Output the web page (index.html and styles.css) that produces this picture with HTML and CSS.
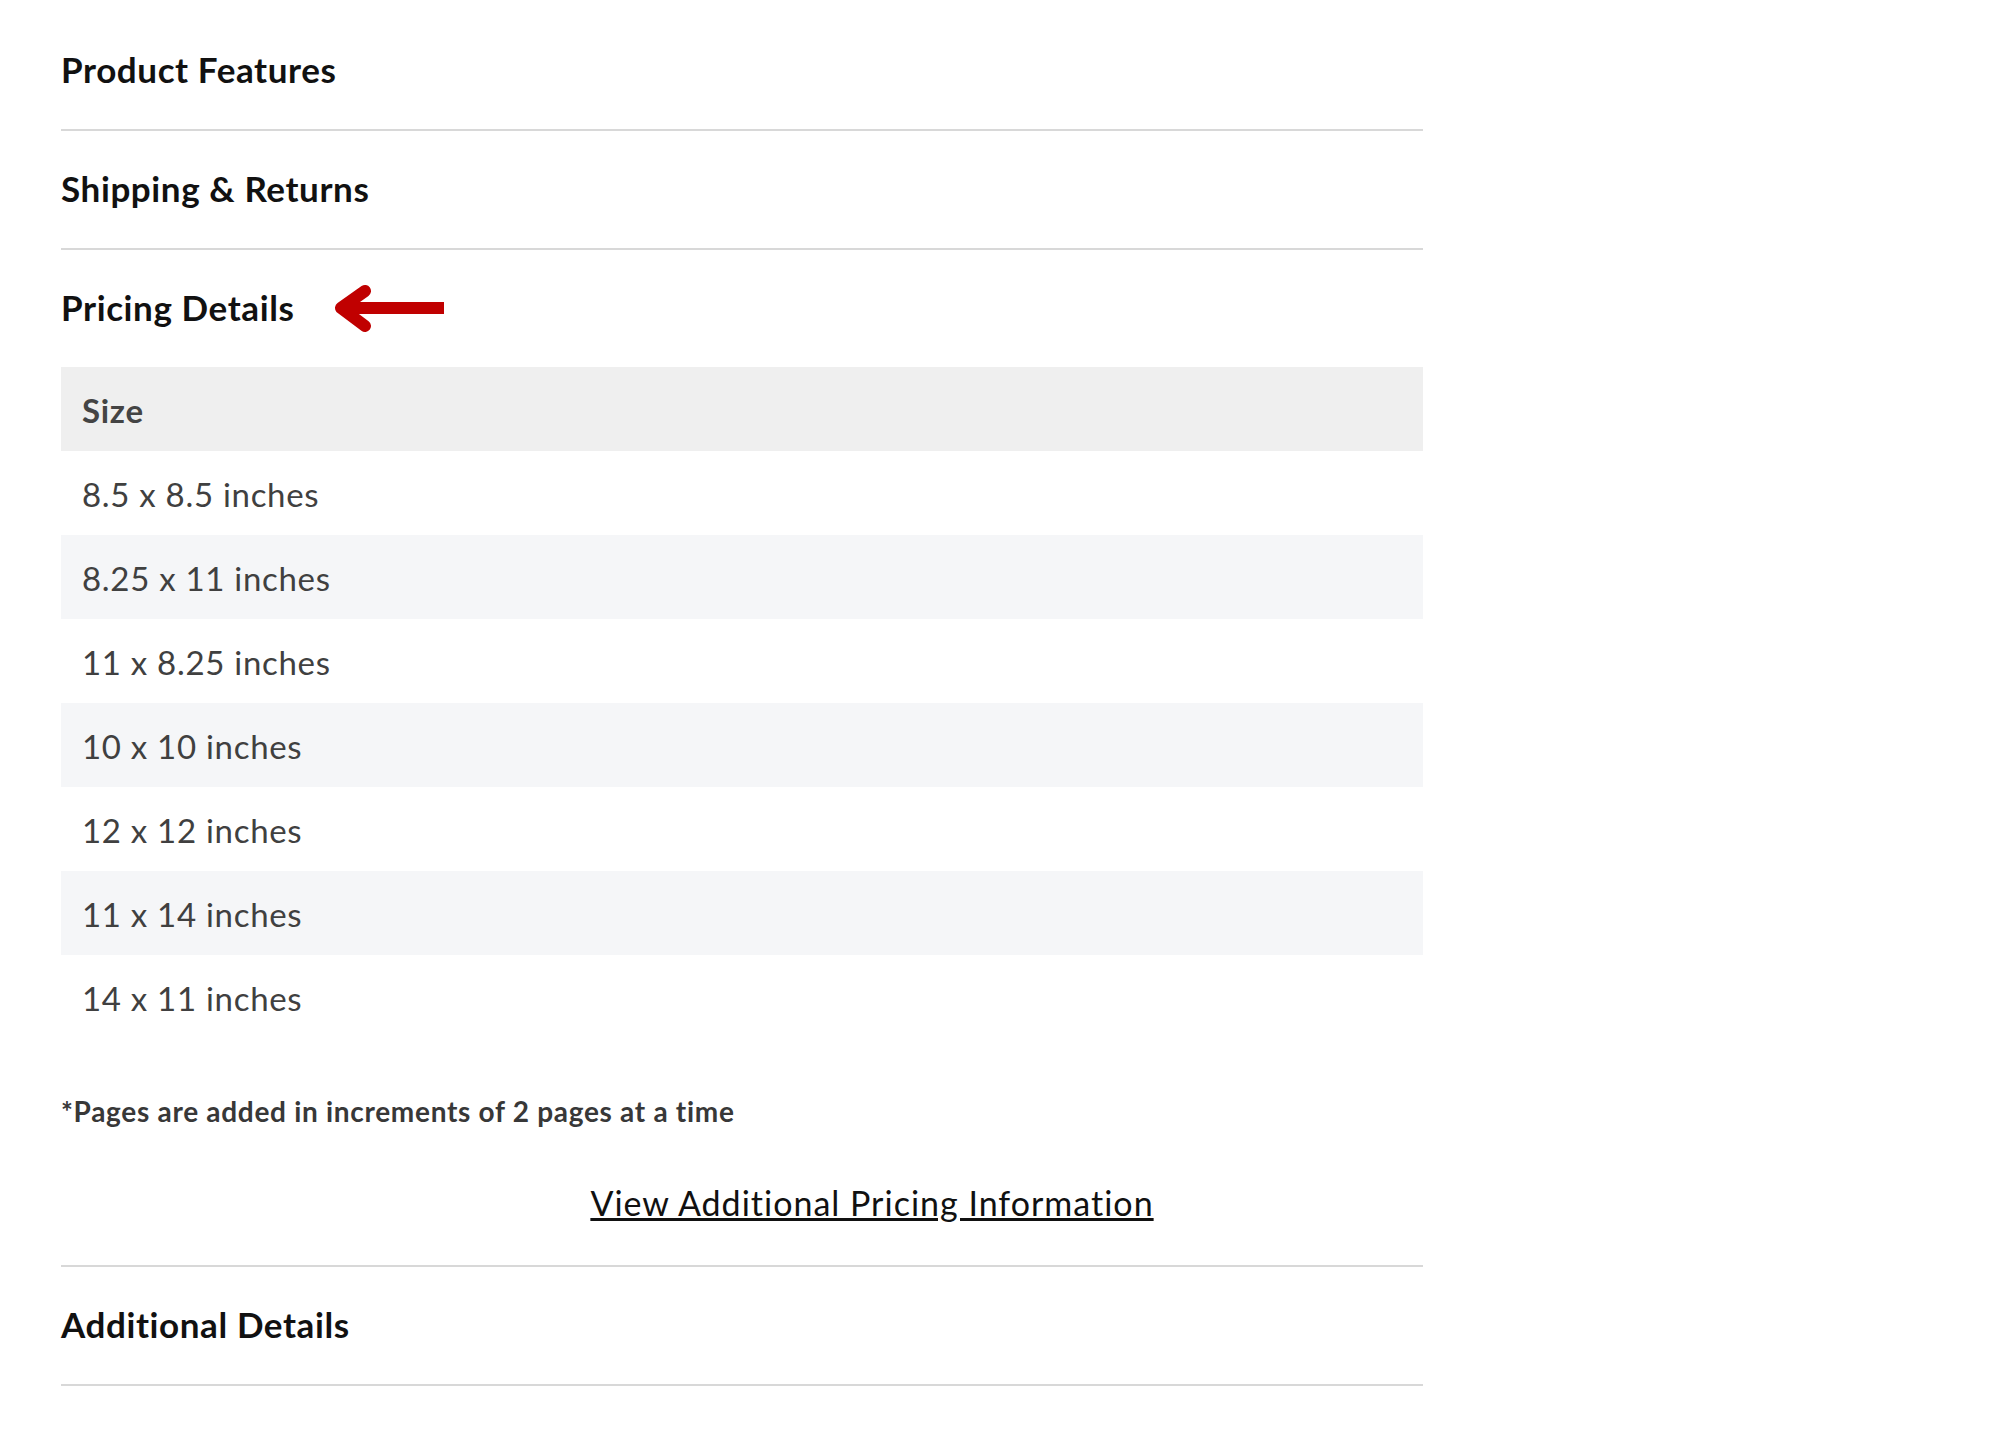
FILE: index.html
```html
<!DOCTYPE html>
<html lang="en">
<head>
    <meta charset="UTF-8">
    <meta name="viewport" content="width=device-width, initial-scale=1.0">
    <title>Pricing Details</title>
    <link rel="stylesheet" href="styles.css">
</head>
<body>
    <div class="details">
        <div class="section">
            <h2 class="section-title">Product Features</h2>
        </div>
        <div class="section">
            <h2 class="section-title">Shipping &amp; Returns</h2>
        </div>
        <div class="section open">
            <h2 class="section-title">
                Pricing Details
                <svg class="arrow" width="112" height="50" viewBox="0 0 112 50" aria-hidden="true">
                    <line x1="10" y1="24" x2="110" y2="24" stroke="#c00000" stroke-width="12"/>
                    <polyline points="31,7 7,24 31,42" fill="none" stroke="#c00000" stroke-width="12" stroke-linecap="round" stroke-linejoin="round"/>
                </svg>
            </h2>
            <div class="section-body">
                <table class="pricing">
                    <thead>
                        <tr><th>Size</th></tr>
                    </thead>
                    <tbody>
                        <tr><td>8.5 x 8.5 inches</td></tr>
                        <tr><td>8.25 x 11 inches</td></tr>
                        <tr><td>11 x 8.25 inches</td></tr>
                        <tr><td>10 x 10 inches</td></tr>
                        <tr><td>12 x 12 inches</td></tr>
                        <tr><td>11 x 14 inches</td></tr>
                        <tr><td>14 x 11 inches</td></tr>
                    </tbody>
                </table>
                <p class="note">*Pages are added in increments of 2 pages at a time</p>
                <div class="more"><a href="#">View Additional Pricing Information</a></div>
            </div>
        </div>
        <div class="section">
            <h2 class="section-title">Additional Details</h2>
        </div>
    </div>
</body>
</html>
```

FILE: styles.css
```css
body { margin: 0; padding: 12px 0 0 61px; font-family: Lato, "Open Sans", sans-serif; background: #fff; color: #111; }
.details { width: 1362px; }
.section { border-bottom: 2px solid #d8d8d8; }
.section-title { display: flex; align-items: center; margin: 0; padding: 36px 0 39px; font-size: 35px; font-weight: bold; line-height: 42px; letter-spacing: 0.6px; color: #111; }
.arrow { margin: -2px 0 -6px 40px; }
.section-body { padding-bottom: 42px; }
.pricing { width: 100%; border-collapse: collapse; font-size: 33px; letter-spacing: 0.7px; color: #404040; }
.pricing th, .pricing td { text-align: left; padding: 24px 21px 21px; line-height: 39px; }
.pricing th { background: #efefef; font-weight: bold; color: #444; }
.pricing tbody tr:nth-child(even) td { background: #f5f6f8; }
.note { margin: 55px 0 0; font-size: 28px; font-weight: bold; line-height: 34px; letter-spacing: 0.7px; color: #383838; }
.more { margin-top: 55px; padding-left: 260px; text-align: center; font-size: 34px; line-height: 40px; letter-spacing: 1px; }
.more a { color: #111; text-decoration: underline; }
```
